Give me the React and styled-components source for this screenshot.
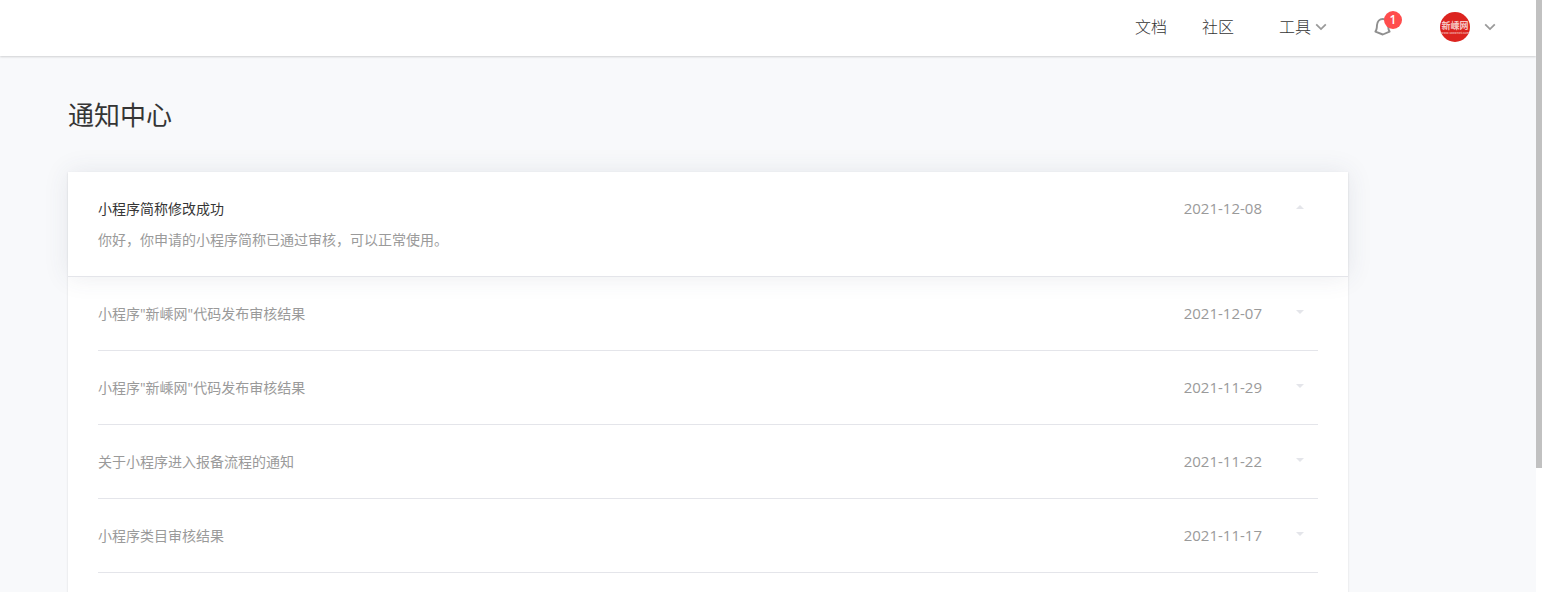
// NoticeCenter
import React, { useState } from 'react'
import styled, { createGlobalStyle } from 'styled-components'

const notices = [
    {
        title: '小程序简称修改成功',
        date: '2021-12-08',
        content: '你好，你申请的小程序简称已通过审核，可以正常使用。',
    },
    { title: '小程序"新嵊网"代码发布审核结果', date: '2021-12-07' },
    { title: '小程序"新嵊网"代码发布审核结果', date: '2021-11-29' },
    { title: '关于小程序进入报备流程的通知', date: '2021-11-22' },
    { title: '小程序类目审核结果', date: '2021-11-17' },
]

const Chevron = () => (
    <svg width="12" height="8" viewBox="0 0 12 8" fill="none" stroke="#9a9a9a" strokeWidth="1.8">
        <path d="M1.2 1.3 6 6.1l4.8-4.8" />
    </svg>
)

const BellIcon = () => (
    <svg width="18" height="20" viewBox="0 0 18 20" fill="none" stroke="#8f8f8f" strokeWidth="1.9" strokeLinejoin="round">
        <path d="M2.400 14.600c.9-1.300 1.300-2.600 1.400-4L4 8C4.300 4.600 6.500 2 9.800 2c3.400 0 5.500 2.600 5.500 6v2.600c0 1.400.4 2.700 1.300 4l-6.800 2.900z" />
    </svg>
)

const Logo = () => (
    <svg width="30" height="30" viewBox="0 0 30 30">
        <circle cx="15" cy="15" r="15" fill="#dc241f" />
        <text x="15" y="17" textAnchor="middle" fontSize="9" fontWeight="700" fill="#f6c9c6">新嵊网</text>
        <text x="15" y="22" textAnchor="middle" fontSize="3" fontWeight="700" fill="#f0a5a2">www.sxxwnet.com</text>
    </svg>
)

export default function App() {
    const [open, setOpen] = useState(0)

    return (
        <>
            <GlobalStyle />
            <Shell>
                <Page>
                    <Header>
                        <Nav>
                            <NavLink href="#docs">文档</NavLink>
                            <NavLink href="#community">社区</NavLink>
                        </Nav>
                        <ToolsButton type="button">工具<Chevron /></ToolsButton>
                        <BellButton type="button" aria-label="通知">
                            <BellIcon />
                            <Badge>1</Badge>
                        </BellButton>
                        <AccountButton type="button" aria-label="账号">
                            <Logo />
                            <Chevron />
                        </AccountButton>
                    </Header>
                    <Main>
                        <Title>通知中心</Title>
                        <List>
                            {notices.map((item, i) => (
                                <Item key={i} $open={open === i}>
                                    <Row $open={open === i}>
                                        <RowButton
                                            type="button"
                                            aria-expanded={open === i}
                                            onClick={() => setOpen(open === i ? -1 : i)}
                                        >
                                            <Subject $open={open === i}>{item.title}</Subject>
                                            <Time>{item.date}</Time>
                                            <Arrow $open={open === i} />
                                        </RowButton>
                                        {open === i && item.content && <Content>{item.content}</Content>}
                                    </Row>
                                </Item>
                            ))}
                        </List>
                    </Main>
                </Page>
                <ScrollTrack>
                    <ScrollThumb />
                </ScrollTrack>
            </Shell>
        </>
    )
}

const GlobalStyle = createGlobalStyle`
* {
    box-sizing: border-box;
}
body {
    margin: 0;
    color: #353535;
    background: #f8f9fb;
    font-family: "Open Sans", "Noto Sans CJK SC", sans-serif;
    font-size: 14px;
}
button {
    padding: 0;
    border: 0;
    background: none;
    color: inherit;
    font: inherit;
    cursor: pointer;
}
svg {
    display: block;
}
`;

const Shell = styled.div`
    display: flex;
    height: 100vh;
    overflow: hidden;
`;

const Page = styled.div`
    flex: 1;
    min-width: 0;
    display: flex;
    flex-direction: column;
`;

const Header = styled.header`
    flex: none;
    display: flex;
    justify-content: flex-end;
    align-items: center;
    height: 56px;
    padding: 0 40px 2px 0;
    background: #fff;
    box-shadow: 0 1px 2px rgba(0, 0, 0, 0.16);
    font-size: 16px;
    font-weight: 300;
`;

const Nav = styled.nav`
    display: flex;
    gap: 35px;
`;

const NavLink = styled.a`
    color: #353535;
    line-height: 24px;
    text-decoration: none;
`;

const ToolsButton = styled.button`
    display: flex;
    align-items: center;
    gap: 4px;
    margin-left: 45px;
    line-height: 24px;
`;

const BellButton = styled.button`
    position: relative;
    margin-left: 46px;
`;

const Badge = styled.span`
    position: absolute;
    top: -6px;
    left: 11px;
    width: 18px;
    height: 18px;
    border-radius: 50%;
    background: #ff4d4d;
    color: #fff;
    font-size: 12px;
    font-weight: 600;
    line-height: 18px;
    text-align: center;
`;

const AccountButton = styled.button`
    display: flex;
    align-items: center;
    gap: 14px;
    margin-left: 49px;
`;

const Main = styled.main`
    flex: 1;
    display: flex;
    flex-direction: column;
    width: 100%;
    max-width: 1400px;
    margin: 0 auto;
`;

const Title = styled.h1`
    margin: 40px 0 38px;
    font-size: 26px;
    font-weight: 400;
    line-height: 38px;
`;

const List = styled.ul`
    flex: 1;
    max-width: 1280px;
    margin: 0;
    padding: 0;
    list-style: none;
    background: #fff;
    box-shadow: 0 1px 2px rgba(150, 150, 150, 0.3);
`;

const Item = styled.li`
    padding: ${(p) => (p.$open ? '0' : '0 30px')};
    background: ${(p) => (p.$open ? '#fff' : 'none')};
    box-shadow: ${(p) => (p.$open ? '0 0 24px rgba(60, 70, 100, 0.1)' : 'none')};
`;

const Row = styled.div`
    padding: ${(p) => (p.$open ? '26px 30px 25px' : '26px 0 25px')};
    border-bottom: 1px solid #e4e5ea;
`;

const RowButton = styled.button`
    display: flex;
    align-items: center;
    width: 100%;
    padding-right: 14px;
    line-height: 22px;
    text-align: left;
`;

const Subject = styled.span`
    flex: 1;
    color: ${(p) => (p.$open ? '#353535' : '#9a9a9a')};
`;

const Time = styled.time`
    height: 22px;
    margin-right: 34px;
    color: #9a9a9a;
    font-size: 15px;
    line-height: 20px;
`;

const Arrow = styled.span`
    margin-bottom: 4px;
    border: 4px solid transparent;
    border-top: ${(p) => (p.$open ? '0' : '4px solid #e4e5ea')};
    border-bottom: ${(p) => (p.$open ? '4px solid #e4e5ea' : '0')};
`;

const Content = styled.p`
    margin: 9px 0 0;
    color: #9a9a9a;
    line-height: 22px;
`;

const ScrollTrack = styled.div`
    flex: none;
    width: 6px;
    background: #fff;
`;

const ScrollThumb = styled.div`
    height: 79%;
    background: #c1c1c1;
`;
